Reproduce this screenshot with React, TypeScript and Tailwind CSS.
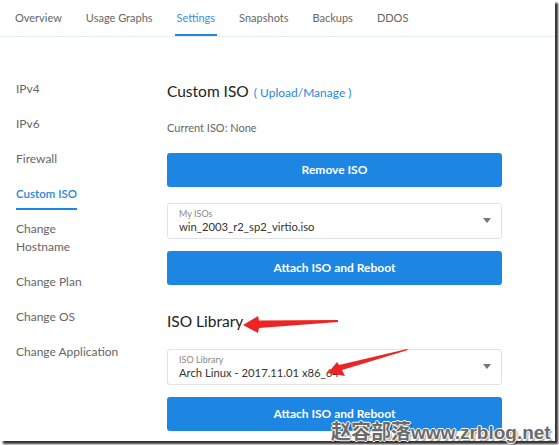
import React from "react";

const tabs = ["Overview", "Usage Graphs", "Settings", "Snapshots", "Backups", "DDOS"];
const side = ["IPv4", "IPv6", "Firewall", "Custom ISO", "Change|Hostname", "Change Plan", "Change OS", "Change Application"];

function Select({ label, value }: { label: string; value: string }) {
  return (
    <div className="mt-[16px] h-[36px] rounded-[3px] border border-[#dfe3e6] bg-white flex items-center pl-[11px] pr-[10px]">
      <div className="flex-1 flex flex-col">
        <span className="text-[9px] leading-[11px] text-[#8a8a8a]">{label}</span>
        <span className="text-[11.25px] leading-[15px] text-[#333]">{value}</span>
      </div>
      <svg width="8" height="5" viewBox="0 0 8 5" className="mb-[2px]">
        <path d="M0 0 L8 0 L4 5 Z" fill="#777" />
      </svg>
    </div>
  );
}

function Btn({ children, mt }: { children: React.ReactNode; mt: string }) {
  return (
    <div className={`${mt} h-[34px] rounded-[3px] bg-[#1d86e2] flex items-center justify-center text-white text-[12px] font-bold`}>
      {children}
    </div>
  );
}

export default function App() {
  return (
    <div className="relative w-[559px] h-[445px] bg-white overflow-hidden" style={{ fontFamily: "Lato, 'Noto Sans', sans-serif" }}>
      <div className="w-[555px] h-[441px] bg-white shadow-[3px_3px_2px_rgba(0,0,0,0.8)]">
        <div className="h-[37px] border-b border-[#e6ebed] flex items-stretch pl-[13px] gap-[20px]">
          {tabs.map((t) => (
            <div
              key={t}
              className={
                t === "Settings"
                  ? "flex items-center px-[2px] pt-[2px] border-b-2 border-[#1d86e2] text-[#3d8fe0] text-[11px]"
                  : "flex items-center px-[2px] pt-[2px] border-b-2 border-transparent text-[#666] text-[11px]"
              }
            >
              {t}
            </div>
          ))}
        </div>
        <div className="flex">
          <div className="w-[167px] pl-[16px] pt-[34px] text-[12px] text-[#666]">
            {side.map((s) =>
              s === "Custom ISO" ? (
                <div key={s} className="pt-[8.5px] pb-[1.5px]">
                  <span className="inline-block leading-[18px] pb-[5px] border-b-2 border-[#1d86e2] text-[#2b86dc] text-[11.5px] font-semibold">
                    {s}
                  </span>
                </div>
              ) : (
                <div key={s} className="py-[8.5px] leading-[18px]">
                  {s.split("|").map((p, i) => (
                    <div key={i}>{p}</div>
                  ))}
                </div>
              )
            )}
          </div>
          <div className="w-[335px] pt-[42px]">
            <div className="flex items-baseline leading-[24px]">
              <span className="text-[15.5px] text-[#222]">Custom ISO</span>
              <span className="ml-[5px] text-[12px] text-[#2b86dc]">( Upload/Manage )</span>
            </div>
            <div className="mt-[14px] leading-[18px] text-[11px] text-[#666]">Current ISO: None</div>
            <Btn mt="mt-[16px]">Remove ISO</Btn>
            <Select label="My ISOs" value="win_2003_r2_sp2_virtio.iso" />
            <Btn mt="mt-[12px]">Attach ISO and Reboot</Btn>
            <div className="mt-[24px] leading-[24px] text-[15.5px] text-[#222]">ISO Library</div>
            <Select label="ISO Library" value="Arch Linux - 2017.11.01 x86_64" />
            <Btn mt="mt-[12px]">Attach ISO and Reboot</Btn>
          </div>
        </div>
      </div>

      <svg className="absolute left-0 top-0 pointer-events-none" width="559" height="445">
        <path d="M338 320 L259 320.5 L258 316 L243 325 L258 333 L259 328 L338 322 Z" fill="#ee2424" />
        <path d="M407 349 L339 365 L337 362 L328 373 L345 376 L342 370 L408 350 Z" fill="#ee2424" />
      </svg>

      <div className="absolute left-[331px] top-[416px] whitespace-nowrap font-bold text-[#6b6b6b] [text-shadow:1px_0_0_#fff,-1px_0_0_#fff,0_1px_0_#fff,0_-1px_0_#fff,2px_2px_1px_rgba(0,0,0,0.35)]">
        <span className="text-[20px]" style={{ fontFamily: "'Noto Sans CJK SC', sans-serif" }}>赵容部落</span>
        <span className="text-[19px]" style={{ fontFamily: "'Liberation Sans', sans-serif" }}>www.zrblog.net</span>
      </div>
    </div>
  );
}
